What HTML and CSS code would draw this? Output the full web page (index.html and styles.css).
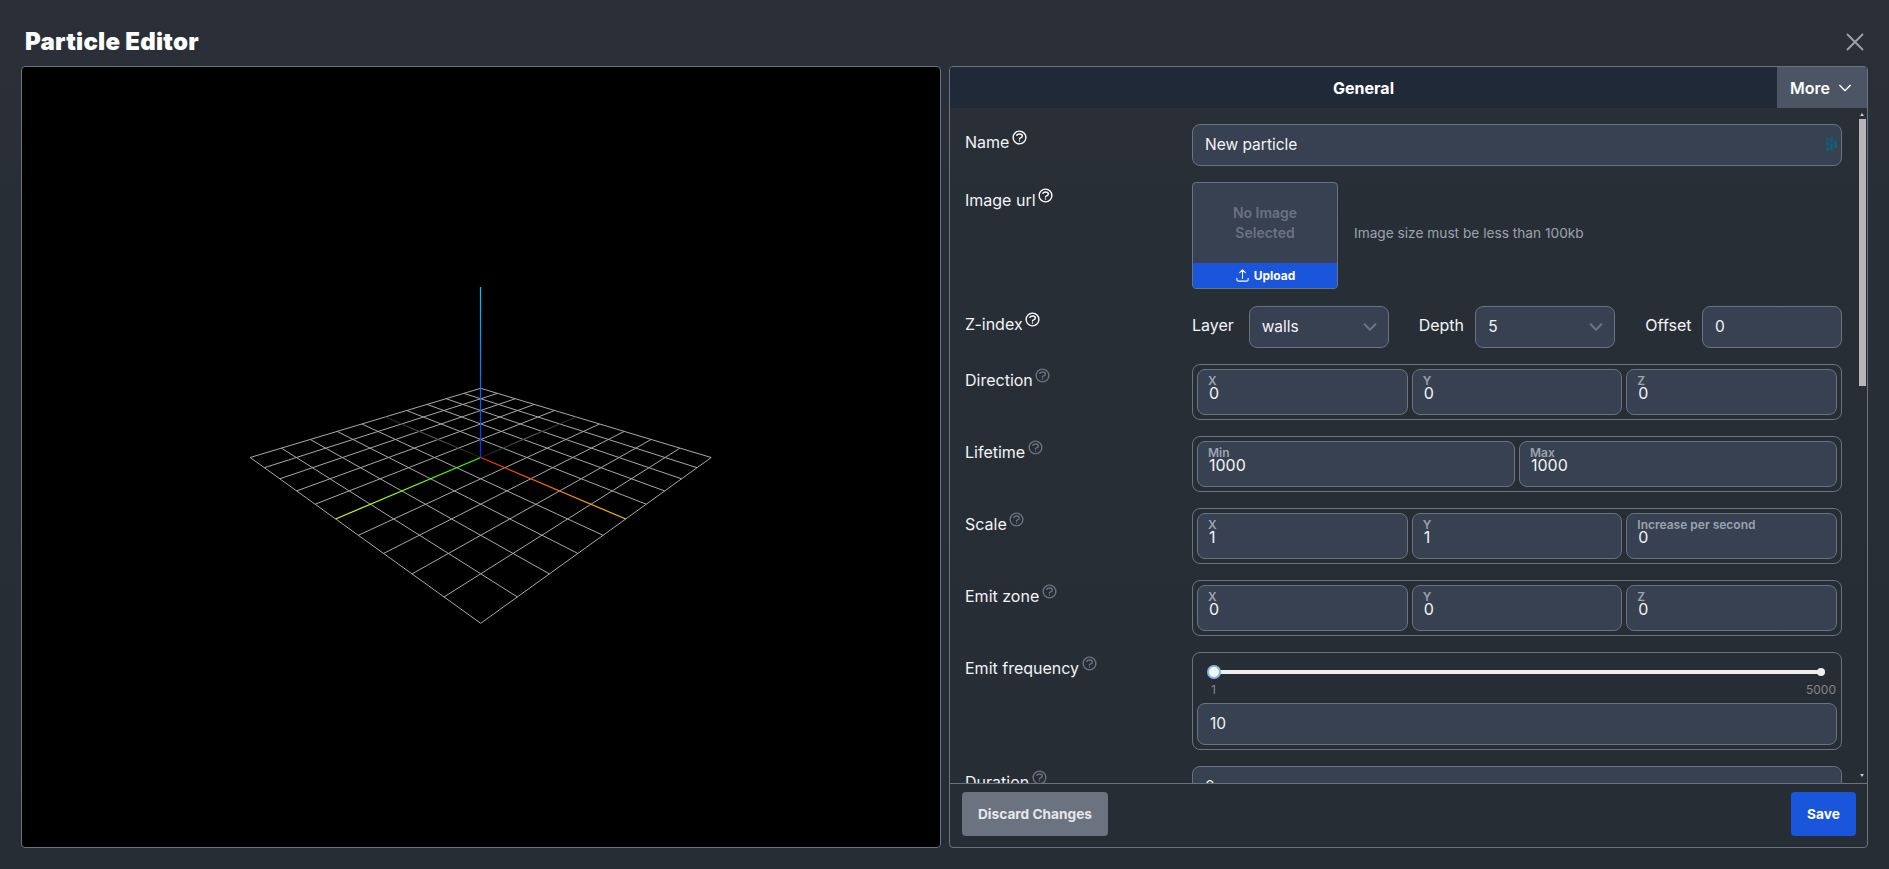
FILE: index.html
```html
<!DOCTYPE html>
<html lang="en">
<head>
<meta charset="utf-8">
<title>Particle Editor</title>
<link rel="stylesheet" href="styles.css">
</head>
<body>
<svg class="icon-defs" width="0" height="0" aria-hidden="true">
  <symbol id="help" viewBox="0 0 24 24"><path fill="none" stroke="currentColor" stroke-width="2" stroke-linecap="round" stroke-linejoin="round" d="M8.228 9c.549-1.165 2.03-2 3.772-2 2.21 0 4 1.343 4 3 0 1.4-1.278 2.575-3.006 2.907-.542.104-.994.54-.994 1.093m0 3h.01M21 12a9 9 0 11-18 0 9 9 0 0118 0z"/></symbol>
  <symbol id="chev" viewBox="0 0 24 24"><path fill="none" stroke="currentColor" stroke-width="2" stroke-linecap="round" stroke-linejoin="round" d="M4 8l8 8 8-8"/></symbol>
  <symbol id="chev-bold" viewBox="0 0 24 24"><path fill="none" stroke="currentColor" stroke-width="3.2" stroke-linecap="round" stroke-linejoin="round" d="M4 8l8 8 8-8"/></symbol>
</svg>
<div class="modal">
  <header class="modal-head">
    <h1 class="modal-title">Particle Editor</h1>
    <button class="close" aria-label="Close"><svg viewBox="0 0 24 24" width="24" height="24"><path fill="none" stroke="currentColor" stroke-width="1.8" stroke-linecap="round" d="M4.5 19.5L19.5 4.5M4.5 4.5l15 15"/></svg></button>
  </header>
  <div class="modal-body">
    <section class="viewport">
      <svg class="scene" viewBox="22 67 918 780" preserveAspectRatio="none">
        <defs>
          <linearGradient id="gx" gradientUnits="userSpaceOnUse" x1="480.7" y1="457.5" x2="625.8" y2="519"><stop offset="0" stop-color="#ff2a00"/><stop offset="1" stop-color="#ffc400"/></linearGradient>
          <linearGradient id="gy" gradientUnits="userSpaceOnUse" x1="480.7" y1="457.5" x2="335.6" y2="519"><stop offset="0" stop-color="#2aff00"/><stop offset="1" stop-color="#dcff00"/></linearGradient>
          <linearGradient id="gz" gradientUnits="userSpaceOnUse" x1="480.5" y1="457.5" x2="480.5" y2="287"><stop offset="0" stop-color="#0030ff"/><stop offset="1" stop-color="#00c8ff"/></linearGradient>
          <linearGradient id="fa" gradientUnits="userSpaceOnUse" x1="480.7" y1="457.5" x2="385.1" y2="417"><stop offset="0" stop-color="#1a1a1a"/><stop offset="0.5" stop-color="#5a5a5a"/><stop offset="1" stop-color="#222"/></linearGradient>
          <linearGradient id="fb" gradientUnits="userSpaceOnUse" x1="480.7" y1="457.5" x2="576.3" y2="417"><stop offset="0" stop-color="#1a1a1a"/><stop offset="0.5" stop-color="#5a5a5a"/><stop offset="1" stop-color="#222"/></linearGradient>
        </defs>
        <g class="grid">
          <line x1="480.7" y1="388.3" x2="711.2" y2="457.5"/>
          <line x1="463.9" y1="393.4" x2="697" y2="467.7"/>
          <line x1="446" y1="398.7" x2="681.6" y2="478.8"/>
          <line x1="427" y1="404.4" x2="664.7" y2="490.9"/>
          <line x1="406.7" y1="410.5" x2="646.2" y2="504.2"/>
          <line x1="361.9" y1="424" x2="603.1" y2="535.3"/>
          <line x1="337.1" y1="431.4" x2="577.8" y2="553.4"/>
          <line x1="310.3" y1="439.5" x2="549.4" y2="573.9"/>
          <line x1="281.4" y1="448.1" x2="517.3" y2="596.9"/>
          <line x1="250.2" y1="457.5" x2="480.7" y2="623.3"/>
          <line x1="480.7" y1="388.3" x2="250.2" y2="457.5"/>
          <line x1="497.5" y1="393.4" x2="264.4" y2="467.7"/>
          <line x1="515.4" y1="398.7" x2="279.8" y2="478.8"/>
          <line x1="534.4" y1="404.4" x2="296.7" y2="490.9"/>
          <line x1="554.7" y1="410.5" x2="315.2" y2="504.2"/>
          <line x1="599.5" y1="424" x2="358.3" y2="535.3"/>
          <line x1="624.3" y1="431.4" x2="383.6" y2="553.4"/>
          <line x1="651.1" y1="439.5" x2="412" y2="573.9"/>
          <line x1="680" y1="448.1" x2="444.1" y2="596.9"/>
          <line x1="711.2" y1="457.5" x2="480.7" y2="623.3"/>
        </g>
        <line class="axis" stroke="url(#fa)" x1="480.7" y1="457.5" x2="385.1" y2="417"/>
        <line class="axis" stroke="url(#fb)" x1="480.7" y1="457.5" x2="576.3" y2="417"/>
        <line class="axis" stroke="url(#gx)" x1="480.7" y1="457.5" x2="625.8" y2="519"/>
        <line class="axis" stroke="url(#gy)" x1="480.7" y1="457.5" x2="335.6" y2="519"/>
        <line class="axis" stroke="url(#gz)" x1="480.5" y1="457.5" x2="480.5" y2="287"/>
      </svg>
    </section>
    <section class="panel">
      <nav class="tabs">
        <div class="tab-active">General</div>
        <button class="tab-more">More<svg class="chev" width="16" height="16"><use href="#chev"/></svg></button>
      </nav>
      <div class="form-wrap">
        <form class="form">
          <div class="row row-plain">
            <div class="label">Name <svg class="help help-on"><use href="#help"/></svg></div>
            <div class="ctl input-wrap">
              <div class="input">New particle</div>
              <svg class="dash" viewBox="0 0 11 15" width="11" height="15"><path d="M0 1h3v3H0zM0 5h3v4H0zM0 10h3v4H0zM3.8 0h3v5h-3zM3.8 6h3v7h-3zM8 4h3v7H8z" fill="#0e6070"/></svg>
            </div>
          </div>
          <div class="row row-plain">
            <div class="label">Image url <svg class="help help-on"><use href="#help"/></svg></div>
            <div class="ctl image-ctl">
              <div class="image-box">
                <div class="image-empty">No Image<br>Selected</div>
                <div class="upload"><svg viewBox="0 0 24 24" width="15" height="15"><path fill="none" stroke="currentColor" stroke-width="1.7" stroke-linecap="round" stroke-linejoin="round" d="M3 16.5v2.25A2.25 2.25 0 005.25 21h13.5A2.25 2.25 0 0021 18.75V16.5m-13.5-9L12 3m0 0l4.5 4.5M12 3v13.5"/></svg>Upload</div>
              </div>
              <span class="hint">Image size must be less than 100kb</span>
            </div>
          </div>
          <div class="row row-plain">
            <div class="label">Z-index <svg class="help help-on"><use href="#help"/></svg></div>
            <div class="ctl z-ctl">
              <div class="z-group">
                <span class="z-label">Layer</span>
                <div class="input select">walls<svg class="chev-sel" width="16" height="16"><use href="#chev-bold"/></svg></div>
              </div>
              <div class="z-group">
                <span class="z-label">Depth</span>
                <div class="input select">5<svg class="chev-sel" width="16" height="16"><use href="#chev-bold"/></svg></div>
              </div>
              <div class="z-group">
                <span class="z-label">Offset</span>
                <div class="input select">0</div>
              </div>
            </div>
          </div>
          <div class="row">
            <div class="label">Direction <svg class="help"><use href="#help"/></svg></div>
            <div class="ctl group">
              <div class="field"><span class="field-label">X</span><span class="field-value">0</span></div>
              <div class="field"><span class="field-label">Y</span><span class="field-value">0</span></div>
              <div class="field"><span class="field-label">Z</span><span class="field-value">0</span></div>
            </div>
          </div>
          <div class="row">
            <div class="label">Lifetime <svg class="help"><use href="#help"/></svg></div>
            <div class="ctl group">
              <div class="field"><span class="field-label">Min</span><span class="field-value">1000</span></div>
              <div class="field"><span class="field-label">Max</span><span class="field-value">1000</span></div>
            </div>
          </div>
          <div class="row">
            <div class="label">Scale <svg class="help"><use href="#help"/></svg></div>
            <div class="ctl group">
              <div class="field"><span class="field-label">X</span><span class="field-value">1</span></div>
              <div class="field"><span class="field-label">Y</span><span class="field-value">1</span></div>
              <div class="field"><span class="field-label">Increase per second</span><span class="field-value">0</span></div>
            </div>
          </div>
          <div class="row">
            <div class="label">Emit zone <svg class="help"><use href="#help"/></svg></div>
            <div class="ctl group">
              <div class="field"><span class="field-label">X</span><span class="field-value">0</span></div>
              <div class="field"><span class="field-label">Y</span><span class="field-value">0</span></div>
              <div class="field"><span class="field-label">Z</span><span class="field-value">0</span></div>
            </div>
          </div>
          <div class="row">
            <div class="label">Emit frequency <svg class="help"><use href="#help"/></svg></div>
            <div class="ctl group group-stack">
              <div class="slider"><span class="thumb"></span><span class="thumb-end"></span></div>
              <div class="slider-scale"><span>1</span><span>5000</span></div>
              <div class="input">10</div>
            </div>
          </div>
          <div class="row">
            <div class="label">Duration <svg class="help"><use href="#help"/></svg></div>
            <div class="ctl"><div class="input">0</div></div>
          </div>
        </form>
        <div class="scrollbar">
          <span class="sb-up"></span>
          <span class="sb-thumb"></span>
          <span class="sb-down"></span>
        </div>
      </div>
      <footer class="panel-foot">
        <button class="btn btn-gray">Discard Changes</button>
        <button class="btn btn-blue">Save</button>
      </footer>
    </section>
  </div>
</div>
</body>
</html>
```
FILE: styles.css
```css
* { box-sizing: border-box; }
html, body { margin: 0; height: 100%; }
body {
  background: linear-gradient(180deg, #2b3038 0%, #282e36 25%, #272d35 100%);
  color: #fff;
  font-family: Inter, "Liberation Sans", sans-serif;
  font-size: 16px;
  overflow: hidden;
}
.icon-defs { position: absolute; }
.modal { height: 869px; display: flex; flex-direction: column; padding: 0 21px 21px 21px; }
.modal-head { height: 66px; display: flex; align-items: center; justify-content: space-between; padding: 18px 1.5px 0 4px; flex: none; }
.modal-title { margin: 0; font-size: 24px; line-height: 28px; font-weight: 900; letter-spacing: 0.25px; }
.close { background: none; border: 0; padding: 0; color: #9ca3af; width: 24px; height: 24px; display: block; }
.close svg { display: block; }
.modal-body { flex: 1; min-height: 0; display: flex; gap: 8px; }
.viewport { width: 920px; flex: none; background: #000; border: 1px solid #6b7280; border-radius: 4px; overflow: hidden; }
.scene { display: block; width: 100%; height: 100%; }
.grid line { stroke: #a8a8a8; stroke-width: 1; }
.axis { stroke-width: 1.2; }
.panel { flex: 1; min-width: 0; height: 782px; display: flex; flex-direction: column; border: 1px solid #6b7280; border-radius: 4px; overflow: hidden; }
.tabs { height: 41px; flex: none; display: flex; background: #1f2937; }
.tab-active { flex: 1; display: flex; align-items: center; justify-content: center; font-size: 16px; font-weight: 700; }
.tab-more { width: 90px; background: #4b5563; border: 0; color: #fff; font: 600 16px Inter, sans-serif; display: flex; align-items: center; justify-content: flex-start; gap: 7px; padding: 0 0 0 13px; }
.chev { color: #fff; }
.form-wrap { flex: 1; min-height: 0; position: relative; overflow: hidden; }
.form { height: 100%; overflow: hidden; padding: 16px 25px 0 15px; display: flex; flex-direction: column; gap: 16px; }
.scrollbar { position: absolute; top: 0; bottom: 0; right: 1px; width: 7px; }
.sb-thumb { position: absolute; top: 11px; left: 0; right: 0; height: 267px; background: #b7b4ba; }
.sb-up, .sb-down { position: absolute; left: 1px; width: 0; height: 0; border-left: 2.5px solid transparent; border-right: 2.5px solid transparent; }
.sb-up { top: 5px; border-bottom: 3px solid #c9c9c9; }
.sb-down { bottom: 6px; border-top: 3px solid #c9c9c9; }
.row { display: flex; flex: none; }
.label { width: 227px; flex: none; padding-top: 3px; font-size: 16px; line-height: 24px; color: #f3f4f6; }
.row-plain .label { padding-top: 5px; }
.help { width: 17px; height: 17px; vertical-align: 2px; margin-left: -3px; color: #6b7280; }
.help-on { color: #fff; }
.ctl { flex: 1; min-width: 0; }
.input-wrap { position: relative; }
.dash { position: absolute; right: 5px; top: 13px; }
.input { height: 42px; background: #374151; border: 1px solid #6b7280; border-radius: 8px; padding: 0 12px 1px; font-size: 15.5px; display: flex; align-items: center; color: #f3f4f6; }
.image-ctl { display: flex; align-items: flex-start; gap: 16px; height: 108px; }
.image-box { width: 146px; height: 107px; border: 1px solid #6b7280; border-radius: 4px; background: #374151; display: flex; flex-direction: column; overflow: hidden; flex: none; }
.image-empty { flex: 1; display: flex; align-items: center; justify-content: center; text-align: center; font-size: 14px; line-height: 20px; font-weight: 600; color: #6b7280; }
.upload { height: 25px; background: #1a56db; display: flex; align-items: center; justify-content: center; gap: 4px; font-size: 12px; font-weight: 700; }
.hint { font-size: 13.7px; color: #9ca3af; padding-bottom: 6px; align-self: center; }
.z-ctl { display: flex; gap: 30px; }
.z-group { flex: 1; min-width: 0; display: flex; align-items: center; justify-content: space-between; }
.z-label { font-size: 16px; color: #f3f4f6; flex: none; padding-bottom: 4px; }
.select { width: 140px; flex: none; position: relative; }
.chev-sel { position: absolute; right: 10px; top: 12px; color: #6b7280; }
.group { border: 1px solid #6b7280; border-radius: 8px; padding: 4px; display: flex; gap: 4px; height: 56px; }
.group-stack { flex-direction: column; gap: 0; height: 98px; }
.field { flex: 1; min-width: 0; background: #374151; border: 1px solid #6b7280; border-radius: 8px; padding: 5px 10px; display: flex; flex-direction: column; }
.field-label { font-size: 12px; line-height: 12px; color: #9ca3af; font-weight: 600; }
.field-value { font-size: 16px; line-height: 14px; margin-top: -1px; padding-left: 1px; color: #f3f4f6; }
.slider { height: 4px; margin: 13px 16px 0 17px; background: #eee; border-radius: 2px; position: relative; flex: none; }
.thumb { position: absolute; left: -7px; top: -5px; width: 14px; height: 14px; border-radius: 50%; background: #f4f8fb; border: 2px solid #84bade; }
.thumb-end { position: absolute; right: -4px; top: -2px; width: 8px; height: 8px; border-radius: 50%; background: #eee; }
.slider-scale { display: flex; justify-content: space-between; padding: 0 1px 0 14px; font-size: 12px; line-height: 14px; margin-top: 9px; height: 20px; color: #858585; flex: none; }
.panel-foot { height: 64px; flex: none; border-top: 1px solid #6b7280; display: flex; justify-content: space-between; align-items: center; padding: 0 11px 3px 12px; }
.btn { height: 44px; border: 0; border-radius: 4px; padding: 0; font: 700 13.7px Inter, sans-serif; }
.btn-gray { background: #6b7280; color: #e5e7eb; width: 146px; }
.btn-blue { background: #1a56db; color: #fff; width: 65px; }
```
